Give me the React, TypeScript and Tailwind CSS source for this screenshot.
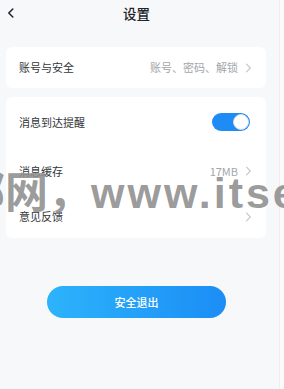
import React from "react";

const font = { fontFamily: '"Noto Sans CJK SC", "Noto Sans", sans-serif' };

function Chevron() {
  return (
    <svg width="7" height="10" viewBox="0 0 7 10" className="ml-[7px] shrink-0">
      <path d="M1.5 1.2 L5.3 5 L1.5 8.8" fill="none" stroke="#c4c6c9" strokeWidth="1.1" strokeLinecap="round" strokeLinejoin="round" />
    </svg>
  );
}

function Row({ label, value, arrow = true, className, children }: { label: string; value?: string; arrow?: boolean; className: string; children?: React.ReactNode }) {
  return (
    <div className={`flex items-center justify-between pl-[13px] pr-[14px] ${className}`}>
      <span className="text-[11px] text-[#333639]">{label}</span>
      <div className="flex items-center">
        {value && <span className="text-[11px] text-[#a3a6aa]">{value}</span>}
        {children}
        {arrow && <Chevron />}
      </div>
    </div>
  );
}

export default function App() {
  return (
    <div className="relative h-[389px] w-[284px] overflow-hidden bg-[#f7f8fa]" style={font}>
      <div className="absolute inset-y-0 left-[279px] w-[5px] border-l border-[#eceef0] bg-[#fbfbfc]" />
      <header className="relative flex h-[27px] items-center justify-center pr-[11px]">
        <svg width="8" height="10" viewBox="0 0 8 10" className="absolute left-[7px] top-[8px]">
          <path d="M5.8 1 L1.8 5 L5.8 9" fill="none" stroke="#1f2226" strokeWidth="1.5" strokeLinecap="round" strokeLinejoin="round" />
        </svg>
        <span className="text-[13.5px] font-medium text-[#222428]">设置</span>
      </header>

      <div className="mx-[6px] mt-[20px] w-[260px]">
        <div className="rounded-[6px] bg-white">
          <Row label="账号与安全" value="账号、密码、解锁" className="h-[41px]" />
        </div>
        <div className="mt-[9px] rounded-[6px] bg-white">
          <Row label="消息到达提醒" arrow={false} className="h-[50px] pr-[16px]">
            <div className="flex h-[18px] w-[38px] items-center justify-end rounded-full bg-[#1f8cf5] pr-[1px]">
              <div className="h-[16px] w-[16px] rounded-full border border-[#d6dbe2] bg-white" />
            </div>
          </Row>
          <Row label="消息缓存" value="17MB" className="h-[48px]" />
          <Row label="意见反馈" className="h-[43px]" />
        </div>
      </div>

      <div className="mt-[48px] flex justify-center pr-[11px]">
        <button className="h-[32px] w-[179px] rounded-full bg-gradient-to-r from-[#2db3fb] to-[#1c8df5] text-[11px] font-medium text-white">
          安全退出
        </button>
      </div>

      <div
        className="pointer-events-none absolute left-[-38px] top-[172px] whitespace-nowrap text-[43px] font-bold leading-none text-[#8e8e8e]/90"
        style={{ fontFamily: '"Liberation Sans", "Noto Sans CJK SC", sans-serif' }}
      >
        部网，<span className="tracking-[3px]">www.itsetup</span>
      </div>
    </div>
  );
}
